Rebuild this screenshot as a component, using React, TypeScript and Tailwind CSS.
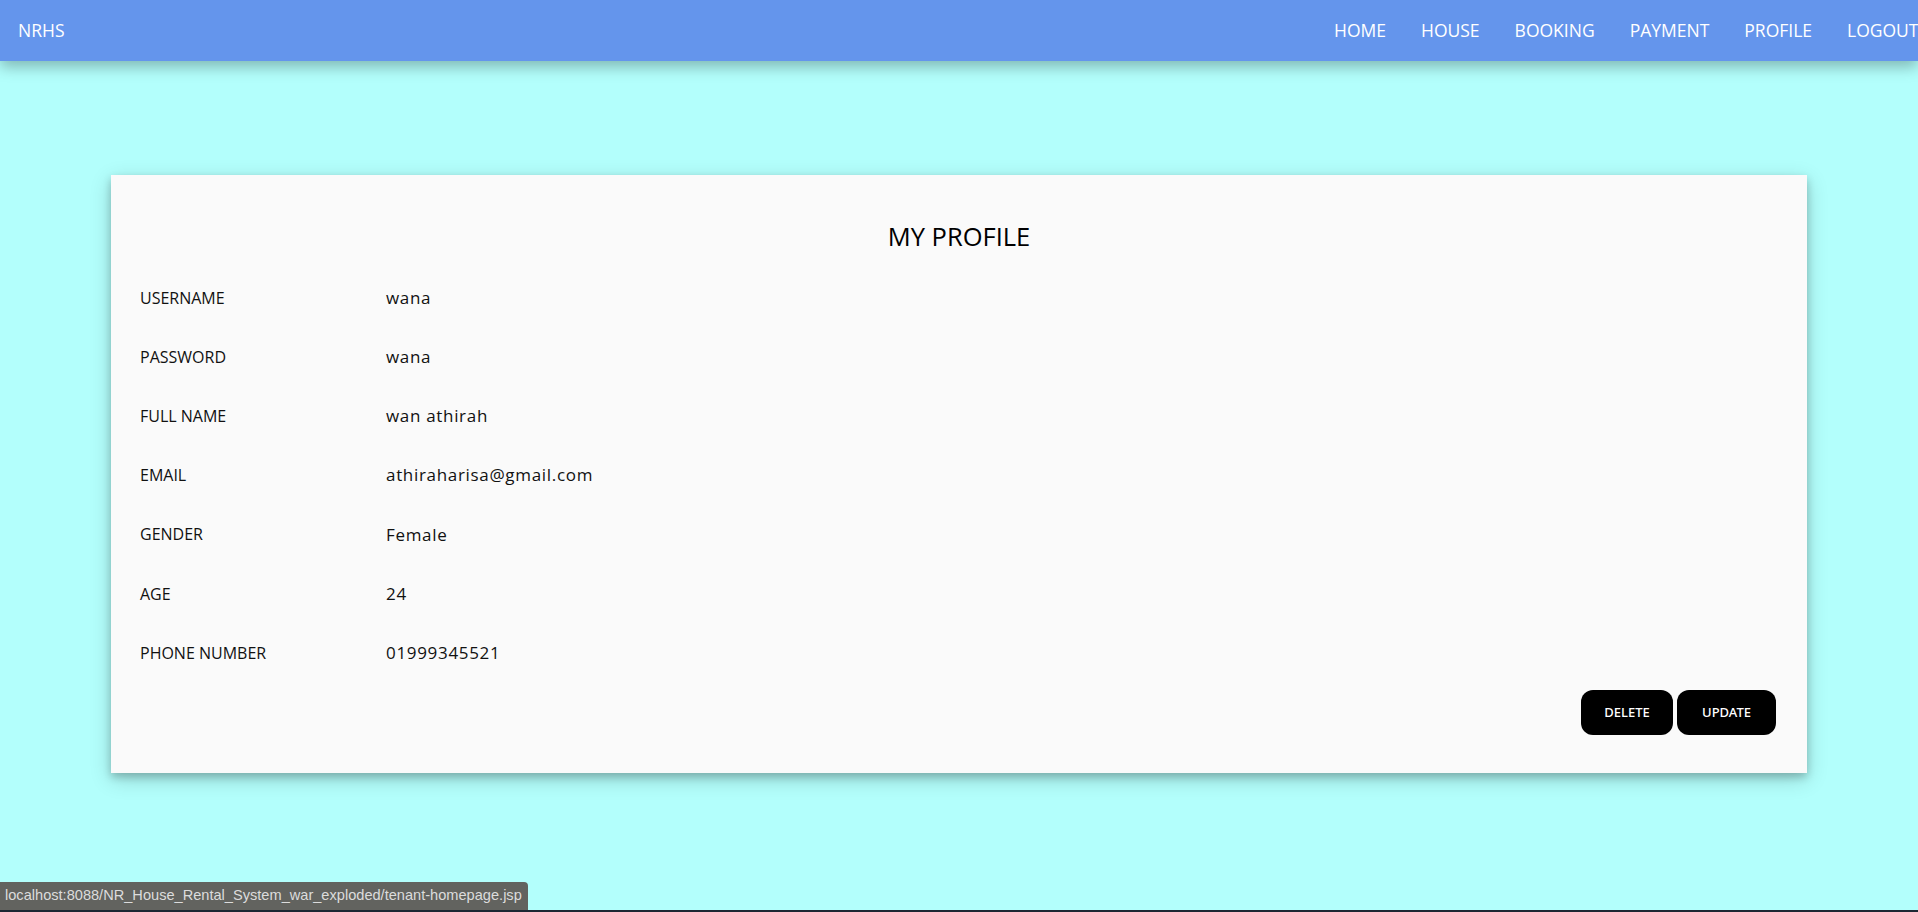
import React from "react";

const NAV_LINKS = ["HOME", "HOUSE", "BOOKING", "PAYMENT", "PROFILE", "LOGOUT"];

const PROFILE_ROWS = [
  { label: "USERNAME", value: "wana" },
  { label: "PASSWORD", value: "wana" },
  { label: "FULL NAME", value: "wan athirah" },
  { label: "EMAIL", value: "athiraharisa@gmail.com" },
  { label: "GENDER", value: "Female" },
  { label: "AGE", value: "24" },
  { label: "PHONE NUMBER", value: "01999345521" },
];

const body = "font-['Open_Sans',_'Noto_Sans',_sans-serif]";

export default function App() {
  return (
    <div className={`relative h-[912px] w-full overflow-hidden bg-[#b3fffc] ${body}`}>
      {/* Top bar */}
      <nav className="relative z-10 flex h-[61px] items-center justify-between bg-[#6495ec] pl-[18px] shadow-[0_6px_14px_rgba(0,0,0,0.28)]">
        <span className="text-[17.5px] text-white">NRHS</span>
        <ul className="-mr-[18px] flex items-center">
          {NAV_LINKS.map((link) => (
            <li key={link} className="px-[17.5px] text-[17.5px] text-white">
              {link}
            </li>
          ))}
        </ul>
      </nav>

      {/* Profile card */}
      <div className="mx-auto mt-[114px] flex h-[598px] w-[1696px] flex-col bg-[#fafafa] px-[29px] pt-[41px] pb-[38px] shadow-[0_4px_8px_0_rgba(0,0,0,0.2),0_6px_20px_0_rgba(0,0,0,0.19)]">
        <h1 className="flex h-[40px] items-center justify-center text-[25.5px] text-black">
          MY PROFILE
        </h1>

        <div className="mt-[12px] flex flex-col">
          {PROFILE_ROWS.map((row) => (
            <div key={row.label} className="flex h-[59.2px] items-center text-[#111]">
              <span className="w-[246px] text-[16px]">{row.label}</span>
              <span className="text-[17px] tracking-[0.04em]">{row.value}</span>
            </div>
          ))}
        </div>

        <div className="mt-auto flex justify-end gap-[4px] pr-[2px]">
          <button className="h-[45px] w-[92px] rounded-[12px] bg-black font-['Noto_Sans',_sans-serif] text-[13px] font-medium text-white">
            DELETE
          </button>
          <button className="h-[45px] w-[99px] rounded-[12px] bg-black font-['Noto_Sans',_sans-serif] text-[13px] font-medium text-white">
            UPDATE
          </button>
        </div>
      </div>

      {/* Browser status bubble */}
      <div className="absolute bottom-[2px] left-0 flex h-[28px] items-center rounded-tr-[4px] bg-[#62635f] pr-[6px] pl-[5px] font-['Liberation_Sans',_sans-serif] text-[14.6px] text-[#dcdcdc]">
        localhost:8088/NR_House_Rental_System_war_exploded/tenant-homepage.jsp
      </div>
      <div className="absolute bottom-0 left-0 h-[2px] w-full bg-[#1d2733]" />
    </div>
  );
}
